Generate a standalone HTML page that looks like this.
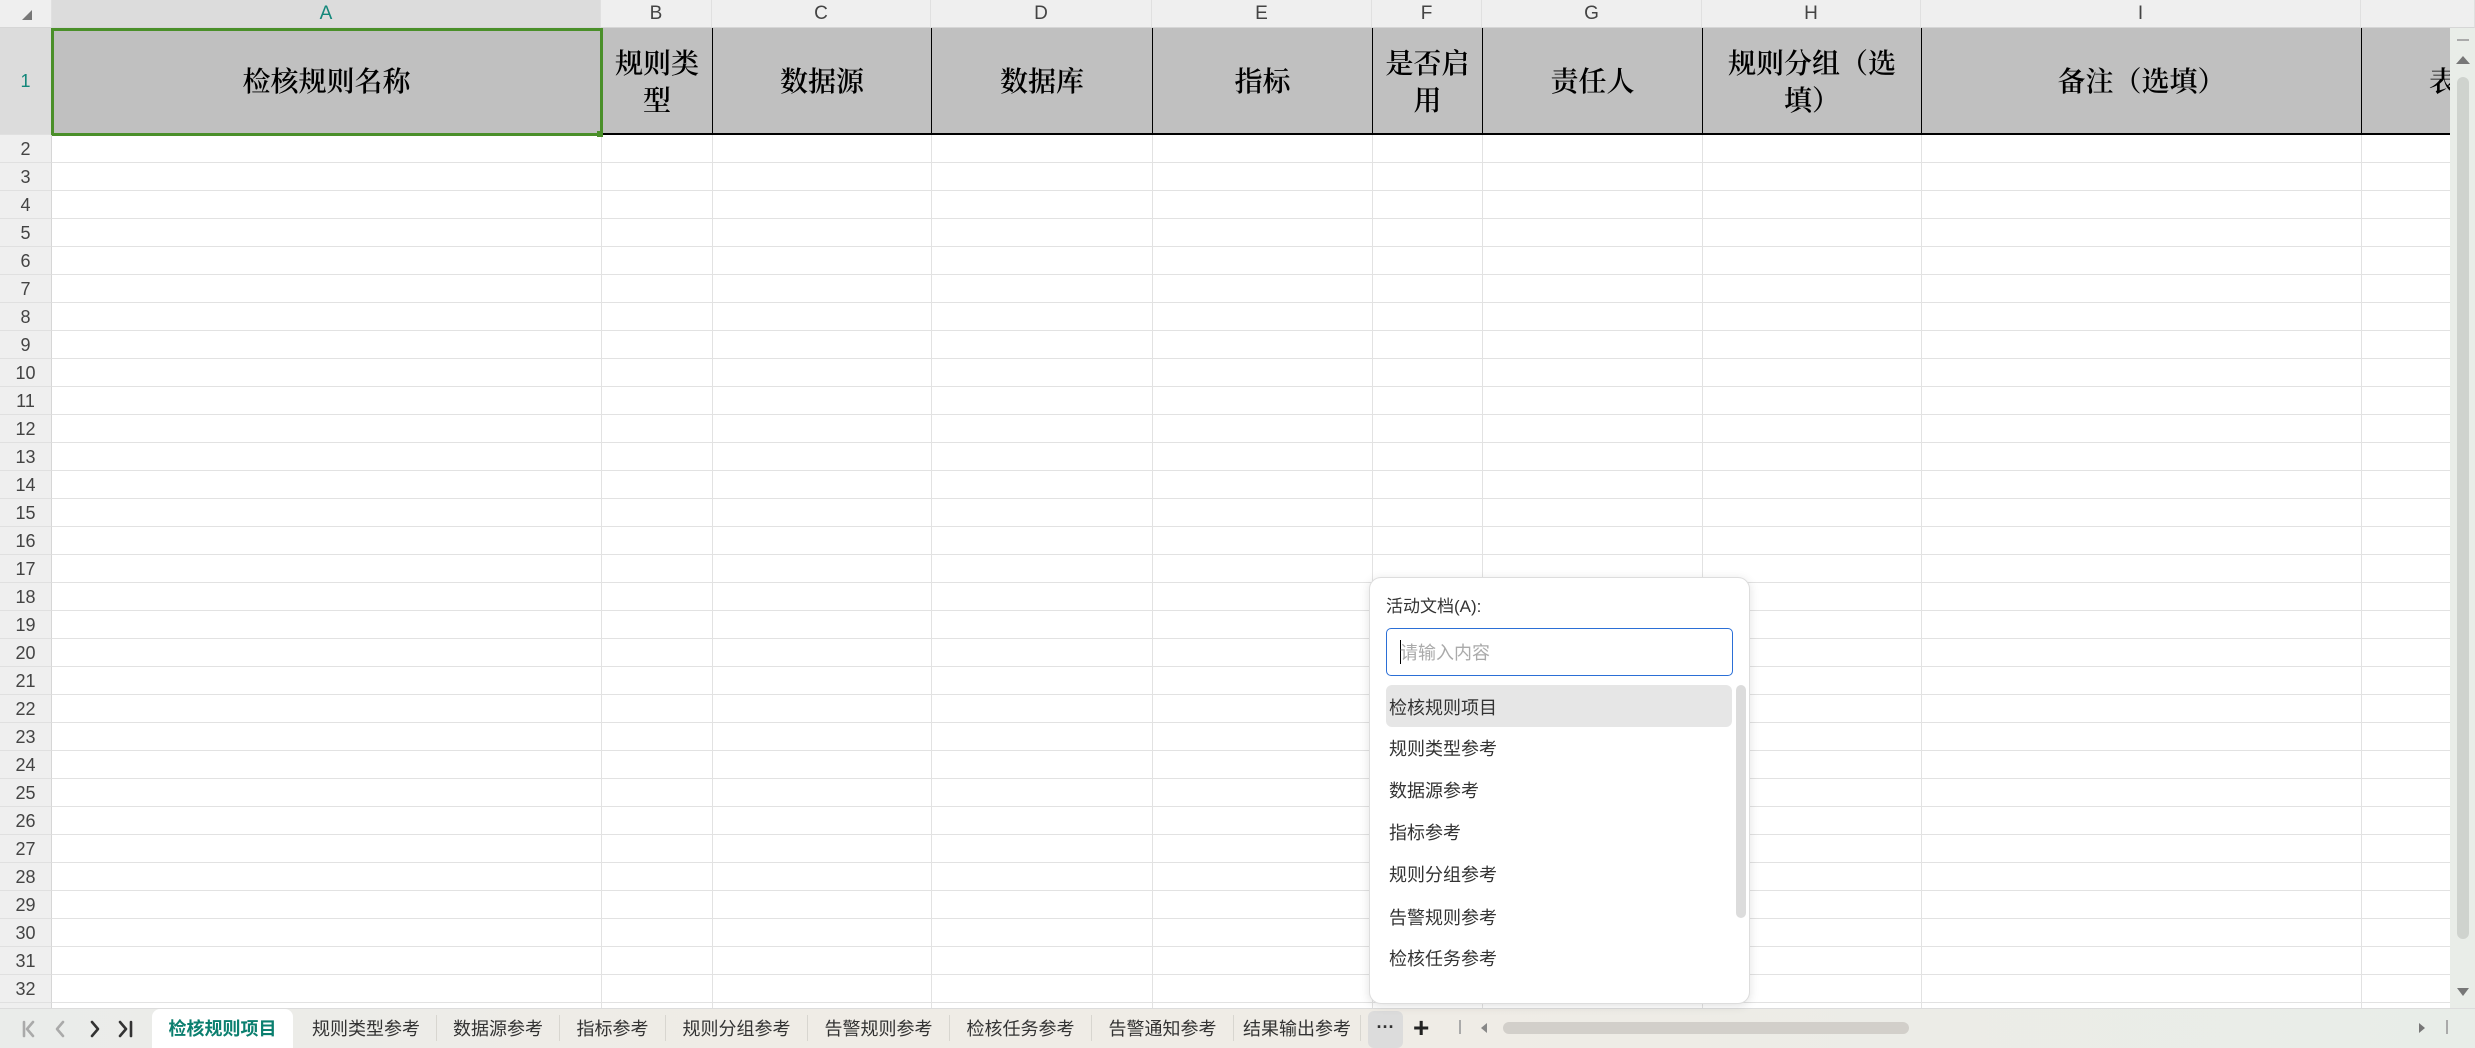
<!DOCTYPE html>
<html><head><meta charset="utf-8"><style>
*{margin:0;padding:0;box-sizing:border-box}
body{width:2475px;height:1048px;overflow:hidden;background:#fff;position:relative;font-family:"Liberation Sans","Noto Sans CJK SC",sans-serif}
.a{position:absolute}
.ch{position:absolute;top:0;height:28px;background:#efefef;border-right:1px solid #e0e0e0;border-bottom:1px solid #d6d6d6;color:#444;font-size:19px;line-height:28px;text-align:center}
.h1{position:absolute;top:28px;height:107px;background:#c0c0c0;border-right:1px solid #000;border-bottom:2px solid #000;display:flex;align-items:center;justify-content:center;text-align:center;font-family:"Noto Serif CJK SC",serif;font-weight:600;font-size:28px;line-height:37px;color:#000;overflow:hidden}
.vl{position:absolute;top:135px;height:873px;width:1px;background:#e2e2e2}
.rn{position:absolute;left:0;width:52px;height:28px;background:#efefef;border-right:1px solid #d6d6d6;border-bottom:1px solid #e0e0e0;font-size:18px;line-height:28px;text-align:center;color:#444}
.tab{position:absolute;top:1009px;height:39px;font-size:18px;line-height:38px;color:#333;font-family:"Noto Sans CJK SC",sans-serif;text-align:center}
.sep{position:absolute;top:1015px;height:26px;width:1px;background:#d8d6d0}
.it{position:absolute;left:1389px;font-size:18px;color:#333;font-family:"Noto Sans CJK SC",sans-serif;line-height:42px;height:42px}
</style></head><body>
<div class="a" style="left:52px;top:135px;width:2398px;height:873px;background:repeating-linear-gradient(to bottom,transparent 0,transparent 27px,#e2e2e2 27px,#e2e2e2 28px)"></div>
<div class="vl" style="left:601px"></div><div class="vl" style="left:712px"></div><div class="vl" style="left:931px"></div><div class="vl" style="left:1152px"></div><div class="vl" style="left:1372px"></div><div class="vl" style="left:1482px"></div><div class="vl" style="left:1702px"></div><div class="vl" style="left:1921px"></div><div class="vl" style="left:2361px"></div>
<div class="ch" style="left:0;width:52px;background:#efefef"><span style="position:absolute;left:22px;top:10px;width:0;height:0;border-left:10px solid transparent;border-bottom:10px solid #777"></span></div>
<div class="ch" style="left:52px;width:549px;background:#dcdcdc;color:#12877a">A</div>
<div class="ch" style="left:601px;width:111px">B</div>
<div class="ch" style="left:712px;width:219px">C</div>
<div class="ch" style="left:931px;width:221px">D</div>
<div class="ch" style="left:1152px;width:220px">E</div>
<div class="ch" style="left:1372px;width:110px">F</div>
<div class="ch" style="left:1482px;width:220px">G</div>
<div class="ch" style="left:1702px;width:219px">H</div>
<div class="ch" style="left:1921px;width:440px">I</div>
<div class="ch" style="left:2361px;width:114px"></div>
<div class="rn" style="top:28px;height:107px;line-height:107px;background:#dcdcdc;color:#12877a">1</div>
<div class="h1" style="left:52px;width:550px">检核规则名称</div>
<div class="h1" style="left:602px;width:111px">规则类<br>型</div>
<div class="h1" style="left:713px;width:219px">数据源</div>
<div class="h1" style="left:932px;width:221px">数据库</div>
<div class="h1" style="left:1153px;width:220px">指标</div>
<div class="h1" style="left:1373px;width:110px">是否启<br>用</div>
<div class="h1" style="left:1483px;width:220px">责任人</div>
<div class="h1" style="left:1703px;width:219px">规则分组（选<br>填）</div>
<div class="h1" style="left:1922px;width:440px">备注（选填）</div>
<div class="h1" style="left:2362px;width:88px;justify-content:flex-start;padding-left:67px;border-right:none;white-space:nowrap">表</div>
<div class="a" style="left:51px;top:28px;width:552px;height:108px;border:3px solid #4a8f29"></div>
<div class="a" style="left:597px;top:131px;width:6px;height:6px;background:#4a8f29"></div>
<div class="rn" style="top:135px">2</div><div class="rn" style="top:163px">3</div><div class="rn" style="top:191px">4</div><div class="rn" style="top:219px">5</div><div class="rn" style="top:247px">6</div><div class="rn" style="top:275px">7</div><div class="rn" style="top:303px">8</div><div class="rn" style="top:331px">9</div><div class="rn" style="top:359px">10</div><div class="rn" style="top:387px">11</div><div class="rn" style="top:415px">12</div><div class="rn" style="top:443px">13</div><div class="rn" style="top:471px">14</div><div class="rn" style="top:499px">15</div><div class="rn" style="top:527px">16</div><div class="rn" style="top:555px">17</div><div class="rn" style="top:583px">18</div><div class="rn" style="top:611px">19</div><div class="rn" style="top:639px">20</div><div class="rn" style="top:667px">21</div><div class="rn" style="top:695px">22</div><div class="rn" style="top:723px">23</div><div class="rn" style="top:751px">24</div><div class="rn" style="top:779px">25</div><div class="rn" style="top:807px">26</div><div class="rn" style="top:835px">27</div><div class="rn" style="top:863px">28</div><div class="rn" style="top:891px">29</div><div class="rn" style="top:919px">30</div><div class="rn" style="top:947px">31</div><div class="rn" style="top:975px">32</div><div class="rn" style="top:1003px"></div>
<div class="a" style="left:2450px;top:28px;width:25px;height:981px;background:#e9ede8"></div>
<div class="a" style="left:2457px;top:39px;width:12px;height:2px;background:#aaa"></div>
<div class="a" style="left:2456px;top:56px;width:0;height:0;border-left:7px solid transparent;border-right:7px solid transparent;border-bottom:8px solid #777"></div>
<div class="a" style="left:2457px;top:77px;width:12px;height:862px;border-radius:6px;background:#cfd3ce"></div>
<div class="a" style="left:2457px;top:988px;width:0;height:0;border-left:6px solid transparent;border-right:6px solid transparent;border-top:8px solid #777"></div>
<div class="a" style="left:0;top:1008px;width:2475px;height:40px;background:linear-gradient(to right,#eaecea 0,#efece6 30%,#efece6 60%,#e8ede8 100%);border-top:1px solid #dcdcdc"></div>
<svg class="a" style="left:18px;top:1018px" width="120" height="22" viewBox="0 0 120 22"><g fill="none" stroke-width="2.6" stroke-linecap="round" stroke-linejoin="round"><path d="M6 4v14M15 4l-6 7 6 7" stroke="#aaa"/><path d="M45 4l-6 7 6 7" stroke="#aaa"/><path d="M74 4l6 7-6 7" stroke="#333"/><path d="M102 4l6 7-6 7M113 4v14" stroke="#333"/></g></svg>
<div class="a" style="left:152px;top:1009px;width:141px;height:39px;background:#fff;border-radius:8px 8px 0 0"></div>
<div class="tab" style="left:152px;width:141px;color:#0b7f6f;font-weight:700">检核规则项目</div>
<div class="tab" style="left:296px;width:140px">规则类型参考</div><div class="sep" style="left:436px"></div>
<div class="tab" style="left:437px;width:122px">数据源参考</div><div class="sep" style="left:559px"></div>
<div class="tab" style="left:560px;width:105px">指标参考</div><div class="sep" style="left:665px"></div>
<div class="tab" style="left:666px;width:141px">规则分组参考</div><div class="sep" style="left:807px"></div>
<div class="tab" style="left:808px;width:141px">告警规则参考</div><div class="sep" style="left:949px"></div>
<div class="tab" style="left:950px;width:141px">检核任务参考</div><div class="sep" style="left:1091px"></div>
<div class="tab" style="left:1092px;width:141px">告警通知参考</div><div class="sep" style="left:1233px"></div>
<div class="tab" style="left:1234px;width:126px">结果输出参考</div><div class="sep" style="left:1360px"></div>
<div class="a" style="left:1368px;top:1011px;width:35px;height:37px;background:#dcdcdc;border-radius:6px;text-align:center;font-size:18px;line-height:32px;color:#333;font-weight:700">···</div>
<div class="a" style="left:1413px;top:1013px;font-size:28px;font-weight:700;color:#222;line-height:30px">+</div>
<div class="a" style="left:1459px;top:1020px;width:2px;height:14px;background:#aaa"></div>
<div class="a" style="left:1481px;top:1023px;width:0;height:0;border-top:5px solid transparent;border-bottom:5px solid transparent;border-right:6px solid #888"></div>
<div class="a" style="left:1503px;top:1022px;width:406px;height:12px;border-radius:6px;background:#d2cfca"></div>
<div class="a" style="left:2419px;top:1023px;width:0;height:0;border-top:5px solid transparent;border-bottom:5px solid transparent;border-left:6px solid #777"></div>
<div class="a" style="left:2446px;top:1020px;width:2px;height:14px;background:#aaa"></div>
<div class="a" style="left:1369px;top:577px;width:381px;height:427px;background:#fff;border:1px solid #ddd;border-radius:12px;box-shadow:0 2px 10px rgba(0,0,0,.12)"></div>
<div class="a" style="left:1386px;top:594px;font-size:17px;color:#333;line-height:26px;font-family:'Liberation Sans','Noto Sans CJK SC',sans-serif">活动文档(A):</div>
<div class="a" style="left:1386px;top:628px;width:347px;height:48px;border:1.5px solid #2b6fd6;border-radius:5px"></div>
<div class="a" style="left:1400px;top:640px;width:1px;height:24px;background:#000"></div>
<div class="a" style="left:1400px;top:637px;font-size:18px;color:#aaa;line-height:30px;font-family:'Noto Sans CJK SC',sans-serif">请输入内容</div>
<div class="a" style="left:1386px;top:685px;width:346px;height:42px;background:#e6e6e6;border-radius:6px"></div>
<div class="it" style="top:686px">检核规则项目</div>
<div class="it" style="top:727px">规则类型参考</div>
<div class="it" style="top:769px">数据源参考</div>
<div class="it" style="top:811px">指标参考</div>
<div class="it" style="top:853px">规则分组参考</div>
<div class="it" style="top:896px">告警规则参考</div>
<div class="it" style="top:937px">检核任务参考</div>
<div class="a" style="left:1736px;top:685px;width:10px;height:233px;border-radius:5px;background:#dcdcdc"></div>
</body></html>
